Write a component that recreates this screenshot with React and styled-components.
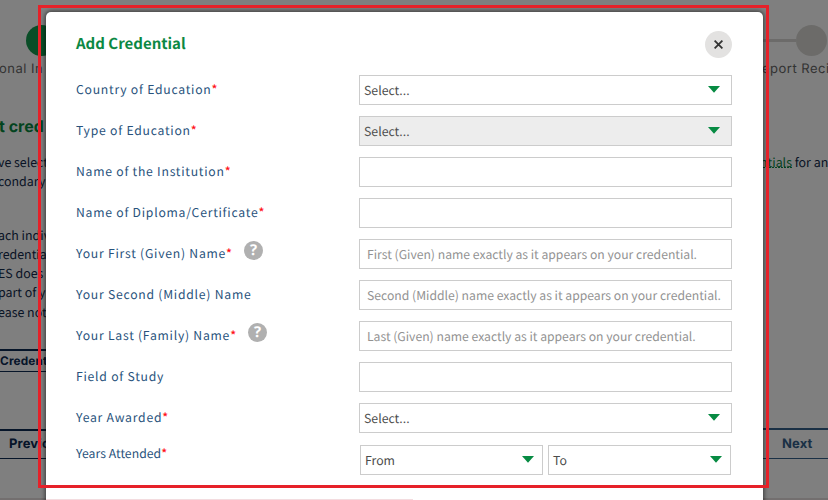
import React from 'react';
import styled, { createGlobalStyle } from 'styled-components';

const sans = '"Noto Sans CJK SC", "Noto Sans", sans-serif';
const display = 'Inter, "Open Sans", sans-serif';

const Global = createGlobalStyle`
  * { box-sizing: border-box; }
  body {
    margin: 0;
    background: #fff;
    font-family: ${sans};
    text-rendering: geometricPrecision;
    overflow: hidden;
  }
`;

const Screen = styled.div`
  position: relative;
  width: 828px;
  height: 500px;
  overflow: hidden;
`;

const Page = styled.div`
  display: grid;
  grid-template-columns: 60px 66px;
  justify-content: space-between;
  height: 500px;
  color: #11294a;
  white-space: nowrap;
`;

const Side = styled.div`
  display: flex;
  flex-direction: column;
  overflow: hidden;
  border-bottom: 2px solid #e6dede;
`;

const Step = styled.div`
  display: flex;
  align-items: center;
  height: 30px;
  margin-top: 25px;
  padding-left: ${(p) => p.$inset || 0}px;
`;

const Track = styled.div`
  width: 34px;
  height: 3px;
  background: #d8d7d5;
`;

const Dot = styled.div`
  flex: none;
  width: 31px;
  height: 31px;
  border-radius: 50%;
  background: ${(p) => (p.$active ? '#149a4e' : '#d8d7d3')};
`;

const StepName = styled.div`
  margin-left: ${(p) => p.$shift}px;
  height: 28px;
  font: 400 13px/29px ${display};
  letter-spacing: 0.5px;
  color: #666;
`;

const PageHeading = styled.h1`
  margin: 29px 0 0 -1px;
  font: 700 16px/28px ${display};
  color: #07883f;
`;

const Copy = styled.p`
  margin: ${(p) => p.$top}px 0 0 ${(p) => p.$shift}px;
  font-size: 12.4px;
  line-height: 19.3px;
`;

const Link = styled.span`
  color: #0a8444;
  background: linear-gradient(90deg, #0a8444 60%, transparent 0) 0 85% / 3px 1px repeat-x;
`;

const PageButton = styled.div`
  flex: none;
  height: ${(p) => p.$height}px;
  margin-top: ${(p) => p.$top}px;
  padding-left: ${(p) => p.$pad}px;
  border: solid ${(p) => p.$tone};
  border-width: 2px 0 1px;
  font: 700 ${(p) => p.$size}px/${(p) => p.$height - 3}px ${display};
  letter-spacing: 0.15px;
  color: ${(p) => p.$tone};
`;

const Backdrop = styled.div`
  position: absolute;
  inset: 0;
  background: rgba(0, 0, 0, 0.5);
`;

const Dialog = styled.section`
  position: absolute;
  left: 46px;
  top: 12px;
  width: 716.5px;
  height: 520px;
  padding: 18px 30.5px 0 30px;
  border-radius: 5px;
  background: #fff;
  box-shadow: 0 0 4px 1px rgba(0, 0, 0, 0.55);
`;

const DialogHeader = styled.header`
  display: flex;
  justify-content: space-between;
  height: 45px;
`;

const Title = styled.h2`
  margin: 0;
  font-size: 15px;
  font-weight: 700;
  line-height: 27px;
  color: #0b8843;
`;

const Close = styled.button`
  display: grid;
  place-items: center;
  width: 27px;
  height: 27px;
  margin-top: 1px;
  padding: 0;
  border: 0;
  border-radius: 50%;
  background: #e3e2e1;
`;

const Row = styled.div`
  display: grid;
  grid-template-columns: 282.5px 1fr;
  height: 41px;
`;

const Label = styled.label`
  display: flex;
  height: 30px;
  margin-top: ${(p) => (p.$tight ? -5 : 0)}px;
  font-size: 12.2px;
  line-height: 28px;
  letter-spacing: ${(p) => (p.$tight ? 0.05 : 0.76)}px;
  color: #28527c;
  white-space: nowrap;
`;

const Star = styled.span`
  color: #ff1018;
  font-weight: 500;
  letter-spacing: 0;
`;

const Help = styled.span`
  display: grid;
  place-items: center;
  width: 19px;
  height: 19px;
  margin: 2px 0 0 12px;
  border-radius: 50%;
  background: #b0b0b0;
  color: #fff;
  font: 700 15px/19px "Open Sans", sans-serif;
  letter-spacing: 0;
`;

const Field = styled.div`
  display: flex;
  align-items: center;
  justify-content: space-between;
  height: 30px;
  min-width: 0;
  padding: 0 ${(p) => (p.$half ? 8 : 11)}px 0 ${(p) => (p.$hint ? 7.5 : 4.5)}px;
  border: 1px solid #ccc;
  background: ${(p) => (p.$disabled ? '#ededed' : '#fff')};
  color: ${(p) => (p.$hint ? '#929292' : '#4c4c4c')};
  font-size: ${(p) => (p.$hint ? 12.2 : 12.3)}px;
  line-height: 28px;
  white-space: nowrap;

  svg { margin-top: -2px; }
`;

const Pair = styled.div`
  display: grid;
  grid-template-columns: 183px 183px;
  gap: 5px;
  padding: 1px 0 0 1px;
`;

const Highlight = styled.div`
  position: absolute;
  left: 38px;
  top: 5px;
  width: 731px;
  height: 483px;
  border: 3px solid #e62129;
`;

const FootLine = styled.div`
  position: absolute;
  left: 46px;
  bottom: 0;
  width: 367px;
  height: 1px;
  background: #f3dcdf;
`;

const Arrow = () => (
  <svg width="12" height="7" viewBox="0 0 12 7">
    <path d="M0 0H12L6 6.7Z" fill="#078b43" />
  </svg>
);

const rows = [
  { label: 'Country of Education', required: true, text: 'Select...', select: true },
  { label: 'Type of Education', required: true, text: 'Select...', select: true, disabled: true },
  { label: 'Name of the Institution', required: true },
  { label: 'Name of Diploma/Certificate', required: true },
  { label: 'Your First (Given) Name', required: true, help: true, text: 'First (Given) name exactly as it appears on your credential.' },
  { label: 'Your Second (Middle) Name', text: 'Second (Middle) name exactly as it appears on your credential.' },
  { label: 'Your Last (Family) Name', required: true, help: true, text: 'Last (Given) name exactly as it appears on your credential.' },
  { label: 'Field of Study' },
  { label: 'Year Awarded', required: true, text: 'Select...', select: true },
];

export default function App() {
  return (
    <Screen>
      <Global />
      <Page>
        <Side>
          <Step $inset={26}><Dot $active /></Step>
          <StepName $shift={-1}>onal In</StepName>
          <PageHeading>t cred</PageHeading>
          <Copy $top={13} $shift={-2}>ve selecte<br />condary</Copy>
          <Copy $top={34} $shift={-2}>ach indiv<br />redential<br />ES does<br />part of y<br />ease not</Copy>
          <PageButton $top={27} $height={23} $pad={0} $size={11.8} $tone="#0c2a52">Credent</PageButton>
          <PageButton $top={57} $height={30} $pad={9} $size={13} $tone="#0c2a52">Previo</PageButton>
        </Side>
        <Side>
          <Step><Track /><Dot /></Step>
          <StepName $shift={0}>eport Reci</StepName>
          <Copy $top={70} $shift={-2}><Link>ntials</Link> for ana</Copy>
          <PageButton $top={256} $height={31} $pad={20} $size={13} $tone="#34608a">Next</PageButton>
        </Side>
      </Page>
      <Backdrop />
      <Dialog>
        <DialogHeader>
          <Title>Add Credential</Title>
          <Close aria-label="Close">
            <svg width="9" height="9" viewBox="0 0 9 9">
              <path d="M.6.6 8.4 8.4M8.4.6.6 8.4" stroke="#333" strokeWidth="1.8" />
            </svg>
          </Close>
        </DialogHeader>
        {rows.map((r) => (
          <Row key={r.label}>
            <Label>
              {r.label}
              {r.required && <Star>*</Star>}
              {r.help && <Help>?</Help>}
            </Label>
            <Field $hint={r.text && !r.select} $disabled={r.disabled}>
              {r.text}
              {r.select && <Arrow />}
            </Field>
          </Row>
        ))}
        <Row>
          <Label $tight>Years Attended<Star>*</Star></Label>
          <Pair>
            <Field $half>From<Arrow /></Field>
            <Field $half>To<Arrow /></Field>
          </Pair>
        </Row>
      </Dialog>
      <FootLine />
      <Highlight />
    </Screen>
  );
}
